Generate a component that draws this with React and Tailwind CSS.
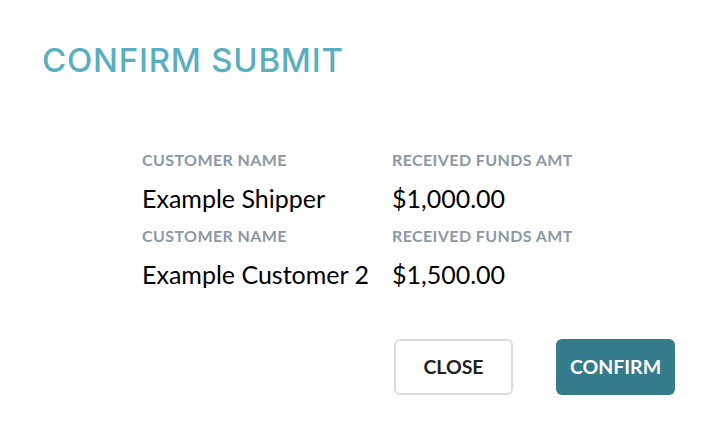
export default function App() {
  const rows = [
    { name: 'Example Shipper', amount: '$1,000.00' },
    { name: 'Example Customer 2', amount: '$1,500.00' },
  ];
  return (
    <div className="h-[434px] w-[714px] bg-white" style={{ fontFamily: 'Lato, "Noto Sans", sans-serif' }}>
      <h2 className="pl-[42px] pt-[40px] text-[33px] font-medium leading-[40px] tracking-[0.75px] text-[#5aafbf]" style={{ fontFamily: 'Inter, "Open Sans", sans-serif' }}>
        CONFIRM SUBMIT
      </h2>
      <div className="pl-[142px] pt-[70px]">
        {rows.map((row) => (
          <div key={row.name} className="grid grid-cols-[250px_1fr]">
            <p className="text-[16px] font-bold leading-[20px] tracking-[0.4px] text-[#8a99a6]">CUSTOMER NAME</p>
            <p className="text-[16px] font-bold leading-[20px] tracking-[0.4px] text-[#8a99a6]">RECEIVED FUNDS AMT</p>
            <p className="pt-[13px] pb-[13px] text-[25px] leading-[30px] text-black">{row.name}</p>
            <p className="pt-[13px] pb-[13px] text-[25px] leading-[30px] text-black">{row.amount}</p>
          </div>
        ))}
      </div>
      <div className="flex justify-end gap-[43px] pr-[39px] pt-[37px]">
        <button className="h-[56px] w-[119px] rounded-[6px] border-2 border-[#dcdcdc] bg-white text-[19.5px] font-bold text-[#222]">
          CLOSE
        </button>
        <button className="h-[56px] w-[119px] rounded-[6px] bg-[#347b8b] text-[19.5px] font-bold text-white">
          CONFIRM
        </button>
      </div>
    </div>
  );
}
